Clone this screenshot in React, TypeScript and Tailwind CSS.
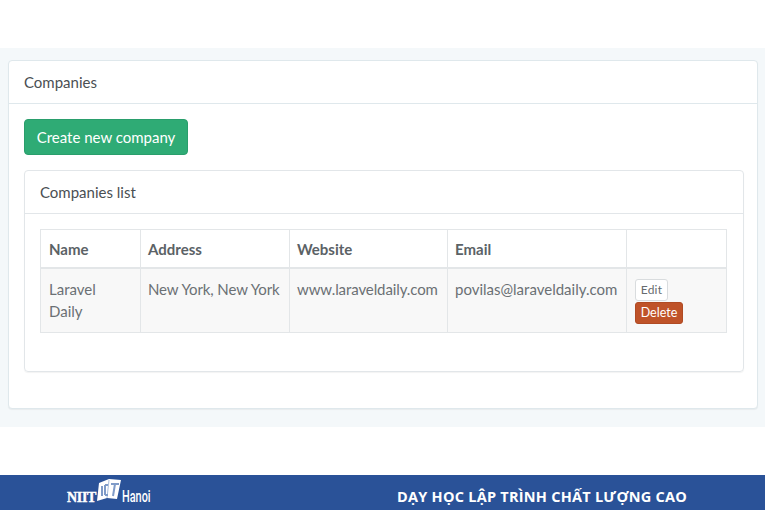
const rows = [
  {
    name: ["Laravel", "Daily"],
    address: "New York, New York",
    website: "www.laraveldaily.com",
    email: "povilas@laraveldaily.com",
  },
];

function Logo() {
  return (
    <div className="flex items-center pl-[67px] w-[397px] shrink-0 text-white">
      <span className="font-['Liberation_Serif',serif] font-bold text-[14px] tracking-[-0.3px] [-webkit-text-stroke:0.4px_white]">NIIT</span>
      <svg width="26" height="24" viewBox="0 0 26 24" className="-mt-[14px] shrink-0">
        <path d="M3 5 L13 1 L25 2 L21 21 L11 20 L1 23 Z" fill="#fff" />
        <path d="M13 2 L11 20" stroke="#a9bedd" strokeWidth="1" />
        <path d="M6 8v10M9 7h3M9 17h3M9 7v10M15 6h8M19 6l-2 12" stroke="#7f9bc8" strokeWidth="2" fill="none" />
      </svg>
      <span className="font-['Roboto',sans-serif] font-medium text-[16px] leading-none scale-x-[0.68] origin-left">Hanoi</span>
    </div>
  );
}

export default function App() {
  return (
    <div className="w-[765px] h-[510px] bg-white flex flex-col font-['Lato',sans-serif] overflow-hidden">
      <div className="h-[48px] shrink-0" />
      <main className="h-[379px] shrink-0 bg-[#f4f8fa] px-[8px] pt-[12px]">
        <section className="w-[750px] h-[349px] bg-white rounded-[4px] border border-[#dfe8ec] shadow-[0_1px_1px_rgba(0,0,0,0.05)]">
          <div className="h-[43px] px-[15px] flex items-center border-b border-[#dfe8ec] text-[15px] text-[#4a4f53]">
            Companies
          </div>
          <div className="px-[15px] pt-[15px]">
            <button className="w-[164px] h-[36px] bg-[#2fab75] rounded-[4px] border border-[#2a9e6c] text-white text-[15px] flex items-center justify-center">
              Create new company
            </button>
            <div className="mt-[15px] w-[720px] h-[202px] rounded-[4px] border border-[#e2e6e9] shadow-[0_1px_1px_rgba(0,0,0,0.05)]">
              <div className="h-[43px] px-[15px] flex items-center border-b border-[#e2e6e9] text-[15px] text-[#4a4f53]">
                Companies list
              </div>
              <div className="px-[15px] pt-[15px]">
                <table className="w-[686px] table-fixed border-collapse text-[15px] text-left">
                  <colgroup>
                    <col className="w-[100px]" />
                    <col className="w-[149px]" />
                    <col className="w-[158px]" />
                    <col className="w-[179px]" />
                    <col className="w-[100px]" />
                  </colgroup>
                  <thead>
                    <tr className="h-[38px] text-[#5b6266]">
                      {["Name", "Address", "Website", "Email", ""].map((h, i) => (
                        <th key={h} className={`border border-[#e3e6e8] border-b-2 pt-[2px] font-bold ${i === 0 ? "pl-[8px]" : "pl-[7px]"}`}>
                          {h}
                        </th>
                      ))}
                    </tr>
                  </thead>
                  <tbody>
                    {rows.map((r) => (
                      <tr key={r.email} className="h-[65px] bg-[#f8f8f8] text-[#6b7074] align-top leading-[22px]">
                        <td className="border border-[#e3e6e8] pl-[8px] pt-[9px]">
                          {r.name[0]}
                          <br />
                          {r.name[1]}
                        </td>
                        <td className="border border-[#e3e6e8] pl-[7px] pt-[9px] whitespace-nowrap tracking-[-0.1px]">{r.address}</td>
                        <td className="border border-[#e3e6e8] pl-[7px] pt-[9px] whitespace-nowrap tracking-[-0.1px]">{r.website}</td>
                        <td className="border border-[#e3e6e8] pl-[7px] pt-[9px] whitespace-nowrap">{r.email}</td>
                        <td className="border border-[#e3e6e8] pl-[8px] pt-[10px]">
                          <button className="block w-[33px] h-[22px] bg-white border border-[#d9dcde] rounded-[3px] text-[12px] leading-none text-[#666b6f] tracking-[0.2px]">
                            Edit
                          </button>
                          <button className="block mt-[1px] w-[48px] h-[22px] pt-[1px] bg-[#bf5329] border border-[#b04b24] rounded-[3px] text-[12.5px] leading-none text-white">
                            Delete
                          </button>
                        </td>
                      </tr>
                    ))}
                  </tbody>
                </table>
              </div>
            </div>
          </div>
        </section>
      </main>
      <div className="h-[48px] shrink-0" />
      <footer className="h-[35px] shrink-0 bg-[#2a5298] flex items-center pt-[9px]">
        <Logo />
        <span className="font-['Open_Sans',sans-serif] font-bold text-[14.5px] text-white tracking-[0.25px] whitespace-nowrap">
          DẠY HỌC LẬP TRÌNH CHẤT LƯỢNG CAO
        </span>
      </footer>
    </div>
  );
}
